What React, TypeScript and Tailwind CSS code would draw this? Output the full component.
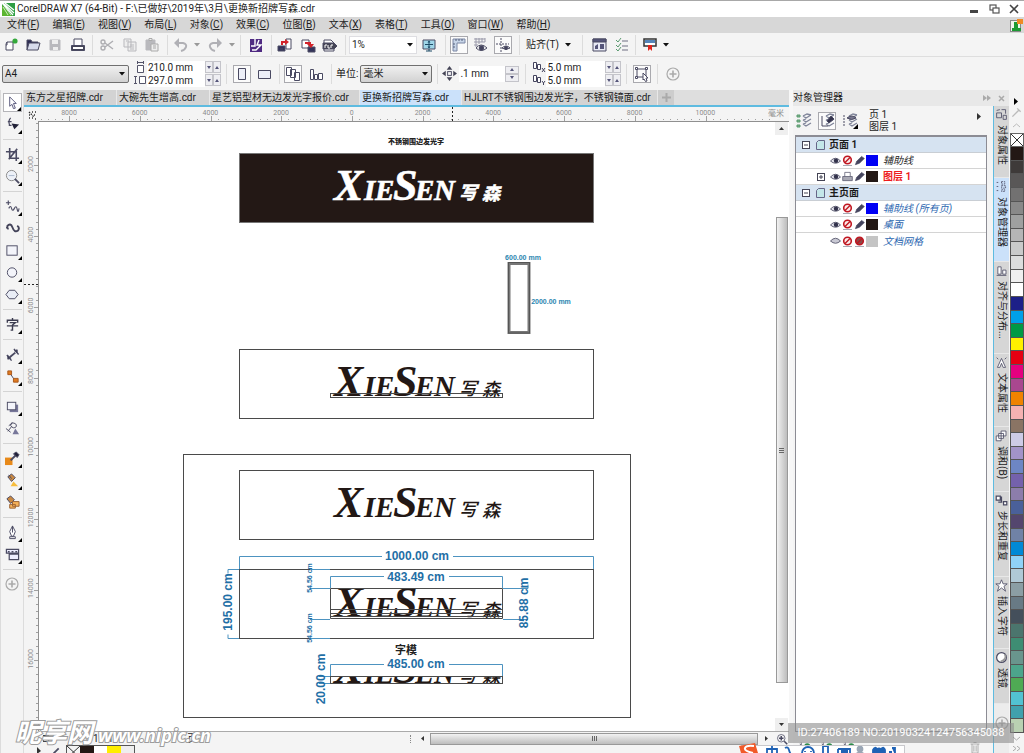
import React from "react";

type Kids = { children?: React.ReactNode };

const Svg = ({ children, s = 16 }: Kids & { s?: number }) => (
  <svg width={s} height={s} viewBox="0 0 16 16" fill="none" stroke="#4a4a62" strokeWidth="1" className="shrink-0" aria-hidden="true">
    {children}
  </svg>
);

const Btn = ({ w = "w-[22px]", label, boxed, children }: Kids & { w?: string; label: string; boxed?: boolean }) => (
  <button aria-label={label} className={`${w} flex h-5 shrink-0 items-center justify-center`}>
    {boxed ? (
      <span className="flex h-[18px] w-[18px] items-center justify-center border border-[#a9a9ae] bg-[#fbfbfb]">{children}</span>
    ) : (
      children
    )}
  </button>
);

const Sep = ({ w = "w-2" }: { w?: string }) => (
  <div className={`${w} flex shrink-0 justify-center`}>
    <div className="h-5 w-px bg-[#dcdcdc]" />
  </div>
);

const Caret = ({ c = "#111" }: { c?: string }) => (
  <svg width="6" height="4" viewBox="0 0 6 4" aria-hidden="true">
    <path d="M0 0h6L3 3.500z" fill={c} />
  </svg>
);

const Spin = ({ stacked }: { stacked?: boolean }) => (
  <div className={stacked ? "flex w-[14px] flex-col" : "flex w-4"}>
    {["减少", "增加"].map((l, i) => {
      const up = stacked ? i === 0 : i === 1;
      return (
        <button key={l} aria-label={l} className={`flex items-center justify-center border border-[#c4c4ca] bg-[#eeeef2] ${stacked ? "h-2 w-[14px]" : "h-3 w-2"}`}>
          <svg width="4" height="3" viewBox="0 0 4 3">
            <path d={up ? "M0 3h4L2 0z" : "M0 0h4L2 3z"} fill="#55557a" />
          </svg>
        </button>
      );
    })}
  </div>
);

const Combo = ({ w, value, label, plain }: { w: string; value: string; label: string; plain?: boolean }) => (
  <div className={`${w} relative shrink-0`}>
    <select
      aria-label={label}
      className={`block h-[18px] w-full appearance-none pl-[2px] text-[10px] leading-4 outline-none ${
        plain ? "border border-[#dedee2] bg-white" : "rounded-xs border border-[#707070] bg-gradient-to-b from-[#f0f0f0] to-[#d2d2d2]"
      }`}
    >
      <option>{value}</option>
    </select>
    <div className="pointer-events-none absolute top-[7px] right-1">
      <Caret />
    </div>
  </div>
);

const menus: [string, string][] = [
  ["文件", "F"], ["编辑", "E"], ["视图", "V"], ["布局", "L"], ["对象", "C"], ["效果", "C"],
  ["位图", "B"], ["文本", "X"], ["表格", "T"], ["工具", "O"], ["窗口", "W"], ["帮助", "H"],
];

const gray = "#b9b9bd";

function TitleBar() {
  return (
    <header className="flex h-[17px] shrink-0 items-center border-t border-[#a8a8a8] bg-white">
      <svg width="13" height="13" viewBox="0 0 13 13" className="mr-[2px] ml-[2px]" aria-hidden="true">
        <rect width="13" height="13" fill="#2f9e44" />
        <path d="M0 0L11 12M1 0L12 10M3 0L12 7" stroke="#fff" strokeWidth="1.200" />
        <path d="M0 2L10 13H0z" fill="#5cb531" />
        <path d="M2 3L9 12M1 4L6 12" stroke="#e9f7dc" strokeWidth=".8" />
      </svg>
      <h1 className="flex-1 text-[10px] leading-4">CorelDRAW X7 (64-Bit) - F:\已做好\2019年\3月\更换新招牌写森.cdr</h1>
      <button aria-label="最小化" className="flex w-5 justify-center"><span className="mt-1 h-[3px] w-2 bg-[#444]" /></button>
      <button aria-label="还原" className="flex w-5 justify-center">
        <svg width="11" height="11" viewBox="0 0 11 11" fill="#fff" stroke="#555" strokeWidth="1.200"><rect x="1" y="1" width="6" height="5" /><rect x="4" y="4" width="6" height="5" /></svg>
      </button>
      <button aria-label="关闭" className="flex w-5 justify-center">
        <svg width="10" height="10" viewBox="0 0 10 10" stroke="#444" strokeWidth="1.600"><path d="M1 1l8 8M9 1L1 9" /></svg>
      </button>
    </header>
  );
}

function MenuBar() {
  return (
    <nav className="flex h-4 shrink-0 items-center gap-[13px] bg-[#d7d7d7] pl-[7px] text-[10px] leading-4">
      {menus.map(([t, k]) => (
        <button key={t} className="whitespace-nowrap">{t}(<u>{k}</u>)</button>
      ))}
      <span className="mr-px ml-auto">
        <svg width="13" height="13" viewBox="0 0 13 13" aria-hidden="true">
          <rect x=".5" y="1.500" width="10" height="11" fill="#eef6ee" stroke="#888" />
          <path d="M4 3h4v6h3v3H2V9h2z" fill="#1c9a33" />
          <rect x="7" y="0" width="6" height="5" fill="#f08a24" />
        </svg>
      </span>
    </nav>
  );
}

const PlusCircle = () => (
  <svg width="14" height="14" viewBox="0 0 14 14" fill="none" stroke="#aaa" strokeWidth="1.200" aria-hidden="true">
    <circle cx="7" cy="7" r="6" />
    <path d="M3.500 7h7M7 3.500v7" strokeWidth="1.600" />
  </svg>
);

function Toolbar() {
  return (
    <div className="flex h-6 shrink-0 items-center border-b border-[#dedede] bg-[#f4f4f4] text-[10px]">
      <Btn label="新建"><Svg><path d="M4 5h6v8H3V7zM4 5v3H3" fill="#fff" /><circle cx="12" cy="4" r="2.600" fill="#35a93c" stroke="none" /></Svg></Btn>
      <Btn label="打开"><Svg><path d="M2 13V3h4l1 2h6v2" fill="#2c2c54" /><path d="M2 13l2-7h11l-2 7z" fill="#d7dbec" /></Svg></Btn>
      <Btn label="保存"><Svg><path d="M3 3h10v10H3z" fill={gray} stroke={gray} /><path d="M5 3h6v4H5zM6 10h5v3H6z" fill="#eee" stroke="none" /></Svg></Btn>
      <Btn label="打印" w="w-6"><Svg><path d="M4 8V2h8v6" fill="#fff" /><path d="M1.500 8.500h13v5h-13z" fill="#444456" /><path d="M3 11h10" stroke="#fff" strokeWidth="2" /></Svg></Btn>
      <Sep w="w-[5px]" />
      <Btn label="剪切" w="w-6"><Svg><g stroke="#aeaeb2" strokeWidth="1.400"><path d="M6 6l8 6M6 10l8-6" /><circle cx="4" cy="5" r="2" /><circle cx="4" cy="11" r="2" /></g></Svg></Btn>
      <Btn label="复制"><Svg><g stroke={gray} fill="#eee"><path d="M2 2h7v8H2zM6 5h8v9H6z" /><path d="M8 8h4M8 10h4M8 12h4M4 4h3" /></g></Svg></Btn>
      <Btn label="粘贴"><Svg><path d="M2 3h9v10H2z" fill={gray} stroke={gray} /><path d="M5 1.500h3v2H5zM7 7h7v7H7z" fill="#eee" stroke="#aaa" /><path d="M9 9h3M9 11h3" stroke="#aaa" /></Svg></Btn>
      <Sep />
      <Btn label="撤消" w="w-5"><Svg><path d="M4 6h6q4 1 3 4t-5 4" stroke="#b0b0b5" strokeWidth="2" /><path d="M1 6l5-5v10z" fill="#b0b0b5" stroke="none" /></Svg></Btn>
      <Btn label="撤消列表" w="w-3"><Caret c="#999" /></Btn>
      <Btn label="重做" w="w-6"><Svg><path d="M12 6H6q-4 1-3 4t5 4" stroke="#b0b0b5" strokeWidth="2" /><path d="M15 6l-5-5v10z" fill="#b0b0b5" stroke="none" /></Svg></Btn>
      <Btn label="重做列表" w="w-[10px]"><Caret c="#999" /></Btn>
      <Sep w="w-[6px]" />
      <Btn label="搜索内容" w="w-[26px]"><Svg><path d="M2 2h12v13H2z" fill="#4f2a82" stroke="none" /><path d="M7 2v7H3M11 3L9 8h4l-5 5H4" stroke="#fff" strokeWidth="1.400" /></Svg></Btn>
      <Sep w="w-1" />
      <Btn label="导入" w="w-6"><Svg><path d="M1 9h7v5H1z" fill="#33335a" /><path d="M9 2h5v10H9zM3 12h3" fill="#fff" /><path d="M5 8V5h4" stroke="#d2232a" strokeWidth="2" /><path d="M8 2l4 3-4 3z" fill="#d2232a" stroke="none" /></Svg></Btn>
      <Btn label="导出"><Svg><path d="M2 3h7v8H2z" fill="#fff" /><path d="M8 10h7v5H8z" fill="#33335a" /><path d="M5 6h5v2" stroke="#d2232a" strokeWidth="2" /><path d="M7 7h7l-3 4z" fill="#d2232a" stroke="none" /></Svg></Btn>
      <Btn label="发布为PDF"><Svg><path d="M2 3h7l3 3v8H2z" fill="#fff" /><path d="M1 6h11l3 3-3 3H1z" fill="#444454" /><path d="M3 8v3M6 8v3M9 8v3M3 8h2M9 8h2M6 11h2" stroke="#fff" /></Svg></Btn>
      <Sep />
      <Combo w="w-[68px]" value="1%" label="缩放级别" plain />
      <Btn label="全屏预览" w="w-6"><Svg><path d="M2 3h12v9H2z" fill="#9fd6e8" /><path d="M8 4v7M4 7.500h8M5 14h6M8 12v2" stroke="#1d4b66" /><path d="M6.500 5.500L8 3.500l1.500 2M6.500 9.500L8 11.500l1.500-2" fill="#1d4b66" stroke="none" /></Svg></Btn>
      <Sep />
      <Btn label="显示标尺" w="w-5" boxed><Svg><path d="M2 2h12v4H6v8H2z" fill="#c8d5e8" stroke="#7a86a4" /><path d="M5 2v2M8 2v2M11 2v2M2 7h2M2 10h2" stroke="#55607a" /></Svg></Btn>
      <Btn label="显示网格" w="w-6"><Svg><path d="M1 2h11M1 5h11M1 8h4M3 1v9M6 1v6M9 1v4M12 1v4" stroke="#9a9aaa" /><path d="M3 11q5-6 11 0-6 5-11 0z" fill="#fff" /><circle cx="8.500" cy="11" r="2.300" fill="#44445e" /></Svg></Btn>
      <Btn label="显示辅助线" w="w-5" boxed><Svg><path d="M6 1v14M1 7h13" strokeDasharray="2 1" /><path d="M7 11q4-4 8 0-4 3-8 0z" fill="#fff" /><circle cx="11" cy="11" r="1.500" fill="#44445e" /></Svg></Btn>
      <Sep w="w-[13px]" />
      <button className="flex items-center gap-[6px] pr-2 text-[10px] leading-4">贴齐(T)<Caret /></button>
      <Sep />
      <Btn label="选项" w="w-6"><Svg><path d="M2 2h13v12H2z" fill="#e8eaf5" /><path d="M2 2h13v3H2z" fill="#55557a" /><path d="M4 9l3-2v5H4zM9 7h4v5H9z" fill="#55557a" stroke="none" /></Svg></Btn>
      <Btn label="清单"><Svg><path d="M2 3l2 2 3-4M2 8l2 2 3-4M2 12l2 2 3-4" stroke="#5b9a70" /><path d="M8 4h6M8 9h6M8 13h6" stroke="#9a9aa8" strokeWidth="1.500" /></Svg></Btn>
      <Sep w="w-[6px]" />
      <Btn label="应用程序启动器"><Svg><path d="M2 2h12v7H2z" fill="#fff" stroke="#333" strokeWidth="1.500" /><path d="M3 3h10v3H3z" fill="#5585b8" stroke="none" /><path d="M6 8h4v6l-2-2-2 2z" fill="#e2231a" stroke="none" /></Svg></Btn>
      <Btn label="启动器列表" w="w-[10px]"><Caret /></Btn>
    </div>
  );
}

const Num = ({ w, value, label }: { w: string; value: string; label: string }) => (
  <input aria-label={label} defaultValue={value} className={`${w} h-[13px] bg-white pl-px text-[10px] leading-3 outline-none`} />
);

const DupIcon = ({ axis }: { axis: string }) => (
  <svg width="14" height="12" viewBox="0 0 14 12" fill="#fff" stroke="#44445e" aria-hidden="true">
    <path d="M1.500 1.500h3v6h-3zM5.500 3.500h3v5h-3z" />
    <path d={axis === "x" ? "M10 7l3 4M13 7l-3 4" : "M10 7l1.500 2L13 7M11.500 9v2"} />
  </svg>
);

function PropertyBar() {
  return (
    <div className="flex h-[33px] shrink-0 items-center bg-[#f4f4f4] pl-[2px] text-[10px]">
      <Combo w="w-[127px]" value="A4" label="页面大小" />
      <div className="ml-1 flex flex-col">
        {[["210.0 mm", "宽度"], ["297.0 mm", "高度"]].map(([v, l], i) => (
          <div key={l} className="flex h-[13px] items-center">
            <svg width="14" height="12" viewBox="0 0 14 12" fill="#fff" stroke="#55556a" aria-hidden="true">
              {i ? <path d="M2.500 2v8M1 2.500h3M1 9.500h3M6.500 2.500h6v7h-6z" /> : <path d="M4.500 4.500h6v7h-6zM4 1.500h7M4.500 0v3M10.500 0v3" />}
            </svg>
            <Num w="w-[58px]" value={v} label={l} />
            <Spin />
          </div>
        ))}
      </div>
      <Sep w="w-[11px]" />
      <Btn label="纵向" w="w-5" boxed><Svg><path d="M4.500 2.500h7v11h-7z" fill="#edeff8" /></Svg></Btn>
      <Btn label="横向" w="w-6"><Svg><path d="M2.500 4.500h12v8h-12z" fill="#edeff8" /></Svg></Btn>
      <Sep w="w-[7px]" />
      <Btn label="所有页面" w="w-5" boxed><Svg><path d="M1.500 1.500h5v8h-5zM5.500 3.500h5v8h-5zM9.500 6.500h5v8h-5z" fill="#fff" /></Svg></Btn>
      <Btn label="当前页" w="w-[25px]"><Svg><path d="M2.500 3.500h3v10h-3zM6.500 8.500h3v5h-3zM10.500 7.500h4v6h-4z" fill="#fff" /></Svg></Btn>
      <Sep w="w-[6px]" />
      <span className="mx-[2px] leading-4 whitespace-nowrap">单位:</span>
      <Combo w="w-[72px]" value="毫米" label="单位" />
      <Sep w="w-[10px]" />
      <Svg s={15}><path d="M8 0l3 4H5zM8 16l3-4H5zM0 8l4-3v6zM16 8l-4-3v6z" fill="#444456" stroke="none" /><rect x="6" y="6" width="4" height="4" /></Svg>
      <div className="ml-[2px] flex h-4 items-center bg-white">
        <Num w="w-[46px]" value=".1 mm" label="微调距离" />
        <Spin stacked />
      </div>
      <Sep w="w-[13px]" />
      <div className="flex flex-col">
        {["x", "y"].map((a) => (
          <div key={a} className="flex h-[13px] items-center">
            <DupIcon axis={a} />
            <Num w="w-[59px]" value="5.0 mm" label={`再制距离 ${a}`} />
            <Spin />
          </div>
        ))}
      </div>
      <Sep w="w-[10px]" />
      <Btn label="视为已填充" boxed><Svg><path d="M3 3h9v8H3z" /><path d="M1.500 1.500h2v2h-2zM11.500 1.500h2v2h-2zM1.500 10.500h2v2h-2z" fill="#fff" /><path d="M9 7l5 5h-2l1 3-1.500.5L10 13l-1 1z" fill="#fff" /></Svg></Btn>
      <Sep />
      <Btn label="快速自定义" w="w-6"><PlusCircle /></Btn>
    </div>
  );
}

const tools: ({ n: string; d: React.ReactNode; f?: boolean } | null)[] = [
  { n: "选择", f: true, d: <path d="M5 2l7 7H9l2 5-2 .5L7.500 10 5 12z" fill="#fff" stroke="#55557a" /> },
  { n: "形状", f: true, d: <><path d="M6 1q-3 3-1 8M3 5h4M4 9h3" strokeWidth="1.300" /><path d="M7 7l8 1-5 5z" fill="#222238" stroke="none" /></> },
  null,
  { n: "裁剪", f: true, d: <path d="M5 1v11h10M1 5h11v10M13 2L4 13" strokeWidth="1.700" /> },
  { n: "缩放", f: true, d: <><circle cx="7" cy="7" r="5.500" fill="#edf1f8" stroke="#888" /><path d="M4 7h6" stroke="#aab8cc" /><path d="M10.500 10.500L15 15" strokeWidth="2" /></> },
  null,
  { n: "手绘", f: true, d: <path d="M1 4h5M3.500 1.500v5M4 10q2-4 3 0t3 0 3 1 2-1" strokeWidth="1.200" /> },
  { n: "艺术笔", d: <path d="M2 6q4-5 6 1t6 3q2-3-1-5M2 6q0 2 2 2" stroke="#44445a" strokeWidth="2" /> },
  { n: "矩形", f: true, d: <rect x="2" y="3" width="11" height="10" fill="#f3f4fa" /> },
  { n: "椭圆形", f: true, d: <circle cx="7.500" cy="8" r="5" fill="#f3f4fa" /> },
  { n: "多边形", f: true, d: <path d="M4.500 3.500h6l3.500 4.500-3.500 4.500h-6L1 8z" fill="#e9edf6" /> },
  null,
  { n: "文本", f: true, d: <path d="M8 1v2M2.500 6V3.500h11V6M5 6h6L8 8.500V14H6M2 9.500h12" stroke="#3c3c50" strokeWidth="1.500" /> },
  null,
  { n: "平行度量", f: true, d: <><path d="M5 11L11 6" strokeWidth="2" /><path d="M2 8.500l5 6M9.500 2l5 6" strokeWidth="1.500" /><path d="M3 9l3 3-3 1zM10 4l3-1v3z" fill="#33334a" /></> },
  { n: "连接器", f: true, d: <><path d="M5 4l6 9" /><path d="M3 2h4v4H3zM9 10h5v4H9z" fill="#e07a1f" stroke="#a8561a" /></> },
  null,
  { n: "阴影", f: true, d: <><rect x="5" y="6" width="9" height="8" fill="#77779a" stroke="none" /><rect x="2.500" y="3.500" width="9" height="8" fill="#f3f4fa" /></> },
  { n: "透明度", d: <><path d="M7 2q6 0 5 4-3 3-6-1zM7 6l-4 5M1 8l5 4M8 2L4 5" /><path d="M8 14l3-6 4 6z" fill="#77779a" stroke="none" /></> },
  null,
  { n: "颜色滴管", f: true, d: <><path d="M0 7h8v8H0z" fill="#e88a1a" stroke="none" /><path d="M6 10l6-6" strokeWidth="2" /><path d="M9 3l3-2 3 3-2 3z" fill="#22223a" /></> },
  { n: "交互式填充", f: true, d: <><path d="M3 4l4-3 4 4-4 4z" fill="#c98840" /><path d="M4 2l3 4" /><path d="M6 14l3-5 5 5z" fill="#f6bd3d" stroke="none" /></> },
  { n: "智能填充", d: <><path d="M2 4l4-3 4 4-4 4z" fill="#c98840" /><path d="M8 7h7v5H8zM5 10h6v4H5z" fill="#f5b25a" stroke="#9a6030" /></> },
  null,
  { n: "轮廓笔", f: true, d: <path d="M8 1l3 6-2 5H7L5 7zM8 1v7M5 12.500h6v2H5z" fill="#fff" /> },
  { n: "图框", f: true, d: <path d="M1.500 2.500h13v4h-13zM4.500 7.500h10v6h-10zM3 5h2M7 5h2M11 5h2" fill="#eef" strokeWidth="1.300" /> },
  null,
];

function Toolbox() {
  return (
    <aside className="flex w-6 shrink-0 flex-col items-center border-r border-l border-[#dcdcdc] bg-[#f4f4f4] pt-px">
      {tools.map((t, i) =>
        t ? (
          <button key={t.n} aria-label={t.n} className="flex h-[22px] w-full shrink-0 items-center justify-center">
            <span className={`relative flex h-[19px] w-[19px] items-center justify-center ${i === 0 ? "border border-[#b4b4b8] bg-white" : ""}`}>
              <Svg s={15}>{t.d}</Svg>
              {t.f && (
                <svg className="absolute right-0 bottom-0" width="4" height="4" viewBox="0 0 4 4"><path d="M4 0v4H0z" fill="#000" /></svg>
              )}
            </span>
          </button>
        ) : (
          <div key={i} className="flex h-2 w-full shrink-0 items-center justify-center">
            <div className="h-px w-[19px] bg-[#d4d4d4]" />
          </div>
        ),
      )}
      <button aria-label="快速自定义" className="flex h-[22px] items-center"><PlusCircle /></button>
    </aside>
  );
}

const STEP = 70.7;

function HRuler() {
  return (
    <svg className="block h-[14px] w-full" fontSize="7" fill="#8c8c8c" aria-hidden="true">
      {Array.from({ length: 104 }, (_, i) => {
        const big = i % 10 === 4;
        return <rect key={i} x={Math.round(17 + (i * STEP) / 10)} y={big ? 9 : 12} width="1" height={big ? 5 : 1} fill="#a0a0a0" />;
      })}
      {[8000, 6000, 4000, 2000, 0, 2000, 4000, 6000, 8000, 10000].map((v, i) => (
        <text key={i} x={45 + i * STEP} y="8" textAnchor="middle">{v}</text>
      ))}
      <text x="752" y="9" textAnchor="middle" fontSize="8">毫米</text>
      <path d="M428.500 0v14" stroke="#222" strokeDasharray="2 2" />
      <path d="M5 5l5 5M5 8h1M8 5h1M5 11h1M11 5h1M10 8h1M8 11h1M11 12h1" stroke="#333" strokeDasharray="1.500 1" strokeWidth="1.300" />
    </svg>
  );
}

function VRuler() {
  return (
    <svg className="block h-full w-[15px] shrink-0 border-r border-[#909090]" fontSize="7" fill="#8c8c8c" aria-hidden="true">
      {Array.from({ length: 85 }, (_, i) => {
        const big = i % 10 === 6;
        return <rect key={i} x={big ? 10 : 12} y={Math.round(2 + (i * STEP) / 10)} width={big ? 4 : 2} height="1" fill="#a0a0a0" />;
      })}
      {[2000, 4000, 6000, 8000, 10000, 12000, 14000, 16000].map((v, i) => (
        <text key={v} transform={`translate(9 ${43 + i * STEP}) rotate(-90)`} textAnchor="middle">{v}</text>
      ))}
      <path d="M0 163.500h15" stroke="#222" strokeDasharray="2 2" />
    </svg>
  );
}

const Logo = ({ y, fill, heavy }: { y: number; fill: string; heavy?: boolean }) => (
  <g transform={`translate(0 ${y})`} fill={fill} stroke={fill} strokeWidth={heavy ? 0.6 : 0}>
    <g fontFamily="'Liberation Serif', serif" fontStyle="italic" fontWeight="700">
      <text x="334" y="0" fontSize="44">X</text>
      <text x="364" y="0" fontSize="29">I</text>
      <text x="375" y="0" fontSize="29">E</text>
      <text x="393" y="0" fontSize="44">S</text>
      <text x="415" y="0" fontSize="29">E</text>
      <text x="434" y="0" fontSize="29">N</text>
    </g>
    <g fontSize="18" fontWeight={heavy ? 700 : 500} fontStyle="italic">
      <text x="459" y="-1">写</text>
      <text x="482" y="0">森</text>
    </g>
  </g>
);

function Artwork() {
  return (
    <svg className="block h-full min-w-0 flex-1 bg-white" role="img" aria-label="更换新招牌写森">
      <defs>
        <clipPath id="strip"><rect x="330" y="676" width="173" height="7" /></clipPath>
      </defs>
      <g transform="translate(-39 -122)" fill="none" stroke="#4a4a4a">
        <text x="416" y="144" fontSize="7" fontWeight="900" fill="#222" stroke="none" textAnchor="middle">不锈钢围边发光字</text>
        <rect x="239.500" y="153.500" width="354" height="69" fill="#231815" stroke="#777" />
        <Logo y={200} fill="#fff" heavy />

        <rect x="509" y="263.500" width="20" height="69" stroke="#777" strokeWidth="3" />
        <rect x="508.500" y="262.500" width="21" height="70.500" stroke="#555" />

        <rect x="239.500" y="349.500" width="354" height="69" />
        <Logo y={396} fill="#231815" />
        <rect x="330.500" y="393.500" width="172" height="4" />

        <rect x="183.500" y="454.500" width="447" height="263" />
        <rect x="239.500" y="470.500" width="354" height="69" />
        <Logo y={517} fill="#231815" />

        <rect x="239.500" y="569.500" width="354" height="69" />
        <Logo y={617} fill="#231815" />
        <path d="M330.500 588.500h172v30h-172zM330.500 609.500h172M330.500 613.500h172M330.500 616.500h172" />

        <g clipPath="url(#strip)"><Logo y={683} fill="#231815" /></g>
        <rect x="330.500" y="676.500" width="172" height="7" />
        <text x="406" y="654" fontSize="11" fontWeight="700" fill="#222" stroke="none" textAnchor="middle">字模</text>

        <g stroke="#4d93c0">
          <path d="M239.500 569v-12.500H382M453 556.500h140.500V569" />
          <path d="M330.500 588v-11.500H384M449 576.500h53.500V588" />
          <path d="M330.500 676v-11.500H384M449 664.500h53.500V676" />
          <path d="M239 569.500h-11v4M239 638.500h-11v-4M330 588.500h-20M330 619.500h-20M503 588.500h25v-4M503 619.500h25M330 676.500h-11M330 683.500h-11" />
          <path d="M310 569.500h20M310 638.500h20" />
        </g>
        <g fill="#1f6fa6" stroke="none" fontFamily="'Liberation Sans', sans-serif" fontWeight="700" fontSize="12" textAnchor="middle">
          <text x="417" y="560">1000.00 cm</text>
          <text x="416" y="581">483.49 cm</text>
          <text x="416" y="668">485.00 cm</text>
          <text transform="translate(232 602) rotate(-90)">195.00 cm</text>
          <text transform="translate(528 603) rotate(-90)">85.88 cm</text>
          <text transform="translate(325 679) rotate(-90)">20.00 cm</text>
          <g fontSize="7">
            <text transform="translate(312 578) rotate(-90)">54.56 cm</text>
            <text transform="translate(312 628) rotate(-90)">54.56 cm</text>
            <text x="523" y="260" fill="#2b86b0">600.00 mm</text>
            <text x="551" y="304" fill="#2b86b0">2000.00 mm</text>
          </g>
        </g>
      </g>
    </svg>
  );
}

const Arrow = ({ d, c = "#333" }: { d: string; c?: string }) => (
  <svg width="7" height="7" viewBox="0 0 7 7" aria-hidden="true"><path d={d} fill={c} /></svg>
);

function Document() {
  const tabs: [string, string][] = [
    ["东方之星招牌.cdr", "w-[93px]"], ["大碗先生增高.cdr", "w-[93px]"], ["星艺铝型材无边发光字报价.cdr", "w-[150px]"],
    ["更换新招牌写森.cdr", "w-[102px]"], ["HJLRT不锈钢围边发光字，不锈钢镜面.cdr", "w-[196px]"],
  ];
  return (
    <main className="flex min-w-0 flex-1 flex-col bg-[#f4f4f4]">
      <div className="flex h-[15px] shrink-0 bg-[#dedede] text-[10px] leading-4" role="tablist">
        {tabs.map(([t, w], i) => (
          <button key={t} role="tab" aria-selected={i === 3} className={`${w} shrink-0 border-r border-[#e8e8e8] pl-[2px] text-left whitespace-nowrap ${i === 3 ? "bg-[#cbe1fa]" : "bg-[#d3d3d3]"}`}>
            {t}
          </button>
        ))}
        <button aria-label="新标签" className="flex w-4 items-center justify-center bg-[#cdcdcd]">
          <svg width="9" height="9" viewBox="0 0 9 9" stroke="#aaa" strokeWidth="2"><path d="M0 4.500h9M4.500 0v9" /></svg>
        </button>
      </div>
      <div className="h-[2px] shrink-0 bg-[#5ebbe0]" />
      <div className="h-[14px] shrink-0"><HRuler /></div>
      <div className="flex min-h-0 flex-1">
        <VRuler />
        <div className="flex min-w-0 flex-1 border-t border-[#909090]"><Artwork /></div>
        <div className="flex w-[15px] shrink-0 flex-col items-center border-t border-[#909090] bg-white">
          <button aria-label="向上滚动" className="flex h-[13px] w-[13px] items-center justify-center bg-[#efefef]"><Arrow d="M1 5h5L3.500 2z" /></button>
          <div className="flex w-full flex-1 flex-col items-center pt-[82px] pb-[35px]">
            <div className="flex w-3 flex-1 items-center justify-center border border-[#999] bg-gradient-to-r from-[#f2f2f2] to-[#bdbdbd]">
              <div className="flex h-[5px] w-[5px] flex-col justify-center border-y border-[#666]"><div className="h-px bg-[#666]" /></div>
            </div>
          </div>
          <button aria-label="向下滚动" className="flex h-[13px] w-[13px] items-center justify-center bg-[#efefef]"><Arrow d="M1 2h5L3.500 5z" /></button>
        </div>
      </div>
      <div className="ml-[15px] flex h-[14px] shrink-0 items-center border-t border-[#aaa] text-[10px] leading-3">
        <div className="flex w-[376px] shrink-0 items-center gap-5 pl-1 whitespace-nowrap">
          <span className="h-[7px] w-[6px] border border-[#444]" />
          <span className="pl-6">1 / 1</span><Arrow d="M2 1v5l3-2.500z" /><Arrow d="M2 1v5l3-2.500z" /><span>页 1</span>
          <span className="mr-1 ml-auto h-2 w-px border-r border-dotted border-[#888]" />
        </div>
        <button aria-label="向左滚动" className="flex w-[15px] justify-center"><Arrow d="M5 1v5L2 3.500z" /></button>
        <div className="flex h-3 min-w-0 flex-1 items-center justify-center border border-[#999] bg-gradient-to-b from-[#f2f2f2] to-[#bdbdbd]">
          <div className="flex h-[5px] w-[5px] justify-center border-x border-[#666]"><div className="w-px bg-[#666]" /></div>
        </div>
        <button aria-label="向右滚动" className="flex w-4 justify-center"><Arrow d="M2 1v5l3-2.500z" /></button>
        <button aria-label="导航器" className="flex w-[15px] justify-center"><Svg s={12}><circle cx="7" cy="7" r="5" /><path d="M11 11l4 4M4 7h6M7 4v6" strokeWidth="2" /></Svg></button>
      </div>
      <div className="flex h-2 shrink-0 overflow-hidden pl-[5px]">
        <div className="flex w-[37px] items-start justify-around pt-[2px]"><Arrow d="M2 0v7l4-3z" /><Svg s={7}><path d="M1 15l12-12" strokeWidth="4" /></Svg></div>
        <div className="flex h-3 border border-[#555]">
          <svg width="13" height="12" stroke="#333"><path d="M0 0l13 12M13 0L0 12" /></svg>
          <div className="w-[14px] bg-[#231815]" /><div className="w-[13px] bg-white" /><div className="w-[14px] bg-[#ffee00]" /><div className="w-[13px] bg-[#eee]" />
        </div>
      </div>
    </main>
  );
}

const Eye = ({ off }: { off?: boolean }) => (
  <svg width="11" height="8" viewBox="0 0 11 8" aria-hidden="true">
    <path d="M.5 4Q5.500-1.500 10.500 4 5.500 8.500.5 4z" fill={off ? "#c9c9d4" : "#e6e6ee"} stroke="#66667a" />
    {!off && <circle cx="6" cy="3.700" r="2.200" fill="#33334c" />}
  </svg>
);
const No = ({ dark }: { dark?: boolean }) => (
  <svg width="11" height="11" viewBox="0 0 11 11" fill="none" aria-hidden="true">
    <circle cx="5.500" cy="5" r="3.800" fill={dark ? "#8a4a4a" : "#fbeaea"} stroke="#c01822" strokeWidth="1.600" />
    <path d="M3 7.500l5-5" stroke="#c01822" strokeWidth="1.500" />
    <path d="M1 10.500h9" stroke="#a9a9b4" />
  </svg>
);
const Printer = () => <Svg s={11}><path d="M4 8V2h8v6" fill="#fff" /><path d="M1 8h14v6H1z" fill="#a9a9b4" /></Svg>;
const Pencil = () => <Svg s={11}><path d="M2 14l2-5 7-7 4 3-7 7z" fill="#44445e" /></Svg>;

type Row = { t: string; head?: boolean; color?: string; cls?: string; off?: boolean; print?: boolean; plus?: boolean };
const rows: Row[] = [
  { t: "页面 1", head: true },
  { t: "辅助线", color: "bg-[#0000f5]", cls: "italic text-[#222]" },
  { t: "图层 1", color: "bg-[#231815]", cls: "font-bold text-[#ee1c1c]", print: true, plus: true },
  { t: "主页面", head: true },
  { t: "辅助线 (所有页)", color: "bg-[#0000f5]", cls: "italic text-[#2b66b0]" },
  { t: "桌面", color: "bg-[#231815]", cls: "italic text-[#2b66b0]" },
  { t: "文档网格", color: "bg-[#c4c4c4]", cls: "italic text-[#2b66b0]", off: true },
];

const Toggle = ({ plus }: { plus?: boolean }) => (
  <svg width="8" height="8" viewBox="0 0 8 8" fill="#fff" stroke="#445" aria-hidden="true">
    <rect x=".5" y=".5" width="7" height="7" /><path d={plus ? "M2 4h4M4 2v4" : "M2 4h4"} />
  </svg>
);

const Layers = () => <path d="M7 3l3 2 5-3M7 7l3 2 5-3M7 11l3 2 5-3M7 3l4-2 4 1M7 7l3-1M7 11l3-1" stroke="#7f8499" strokeWidth="1.300" />;

function ObjectManager() {
  return (
    <section className="flex min-w-0 flex-1 flex-col border-l-4 border-[#f7f7f7] bg-[#f4f4f4] text-[10px]">
      <div className="flex h-[29px] shrink-0 items-center">
        <Btn label="显示对象属性"><Svg><path d="M1 2h3v2H1zM1 7h3v2H1zM1 12h3v2H1z" fill="#7fb58a" stroke="#5b9a70" /><Layers /></Svg></Btn>
        <Btn label="跨图层编辑" w="w-6" boxed><Svg><Layers /><path d="M3 3v10h6" /><path d="M8 8l4-5 3 3-5 4z" fill="#33334c" /></Svg></Btn>
        <Btn label="图层管理器视图"><Svg><path d="M2 2v12" strokeDasharray="2 1" /><Layers /><path d="M5 5q5-4 9 0-4 3-9 0z" fill="#77778e" /><path d="M16 11v5h-5z" fill="#000" stroke="none" /></Svg></Btn>
        <div className="ml-2 flex-1 leading-3"><p>页 1</p><p>图层 1</p></div>
        <button aria-label="选项" className="mr-[10px] mb-2"><Arrow d="M1 0v7l4-3.500z" /></button>
      </div>
      <ul className="mr-[6px] ml-[2px] flex-1 border border-t-2 border-[#8c8c94] bg-white">
        {rows.map((r) =>
          r.head ? (
            <li key={r.t} className="flex h-4 items-center border-b border-[#c9ced4] bg-[#d6e3f1] pl-[6px] font-bold">
              <Toggle />
              <svg width="11" height="12" viewBox="0 0 11 12" className="mr-[3px] ml-[5px]"><path d="M3.500 1.500h6v9h-8v-7z" fill="#c4e6e9" stroke="#668" /></svg>
              {r.t}
            </li>
          ) : (
            <li key={r.t} className="flex h-4 items-center border-b border-[#d4d4d4] last:border-0">
              <span className="flex w-[34px] justify-center pl-4">{r.plus && <Toggle plus />}</span>
              <span className="flex items-center gap-px">
                <Eye off={r.off} />
                {r.print ? <Printer /> : <No />}
                {r.off ? <No dark /> : <Pencil />}
                <span className={`${r.color} h-[11px] w-3`} />
              </span>
              <span className={`pl-[5px] whitespace-nowrap ${r.cls}`}>{r.t}</span>
            </li>
          ),
        )}
      </ul>
      <div className="flex h-[21px] shrink-0 items-end gap-[10px] pl-[6px]">
        {["新建图层", "新建主图层", "新建奇数页"].map((n) => (
          <button key={n} aria-label={n}><Svg s={12}><path d="M1 4l5 3-4 2 6 4M3 2v3" /><circle cx="11" cy="7" r="4" fill="#2c8a4a" stroke="none" /></Svg></button>
        ))}
        <button aria-label="删除" className="mr-3 ml-auto"><Svg s={12}><path d="M2 4h12M4 4v12h8V4M6 2h4M6.500 6v8M9.500 6v8" stroke="#999" /></Svg></button>
      </div>
    </section>
  );
}

const sideTabs: { t: string; h: string; on?: boolean; d: React.ReactNode }[] = [
  { t: "对象属性", h: "h-[72px]", d: <path d="M2 6h6v6H2zM8 2h5v5M10 9h4v5h-4zM2 3l4-1" /> },
  { t: "对象管理器", h: "h-[84px]", on: true, d: <path d="M2 3h3M2 8h3M2 13h3M8 2h4v3H8zM8 7h5v3H8zM8 12h4v2H8z" strokeDasharray="2 1" /> },
  { t: "对齐与分布...", h: "h-[92px]", d: <path d="M2 14h12M3.500 3.500h4v9h-4zM9.500 7.500h4v5h-4z" fill="#fff" /> },
  { t: "文本属性", h: "h-[73px]", d: <path d="M3 14L8 3l5 11h-3L8 9l-2 5zM2 2l2 2M14 2l-2 2" fill="#fff" /> },
  { t: "调和(B)", h: "h-[65px]", d: <path d="M7.500 2.500h6v6h-6zM4.500 5.500h6v6h-6zM1.500 8.500h6v6h-6z" fill="#fff" /> },
  { t: "步长和重复", h: "h-[85px]", d: <path d="M1.500 2.500h5v5h-5zM10.500 9.500h4v4h-4zM8 3v7M4 10h5" fill="#fff" strokeWidth="1.500" /> },
  { t: "插入字符", h: "h-[72px]", d: <path d="M8 1l2 5h5l-4 3 2 6-5-4-5 4 2-6-4-3h5z" fill="#fff" /> },
  { t: "透镜", h: "h-[55px]", d: <><circle cx="8" cy="8" r="6" fill="#fff" strokeWidth="1.500" /><path d="M12 4q3 6-5 9" stroke="#999" strokeWidth="2" /></> },
];

function SideTabs() {
  return (
    <nav className="flex w-4 shrink-0 flex-col border-l border-[#5ebbe0] bg-[#ececec]">
      {sideTabs.map((s) => (
        <button key={s.t} className={`${s.h} flex shrink-0 flex-col items-center gap-1 border-b border-[#e8e8e8] pt-[2px] ${s.on ? "bg-[#cbe1fa]" : "bg-[#d6d6d6]"}`}>
          <Svg s={13}>{s.d}</Svg>
          <span className="text-[10px] leading-[14px] whitespace-nowrap [text-orientation:sideways] [writing-mode:vertical-rl]">{s.t}</span>
        </button>
      ))}
      <button aria-label="添加面板" className="mt-3 flex justify-center"><PlusCircle /></button>
    </nav>
  );
}

function Docker() {
  return (
    <div className="flex w-[220px] shrink-0 flex-col">
      <div className="flex h-4 shrink-0 items-center border-l-4 border-[#f7f7f7] bg-[#e8e8e8] pr-1 text-[10px]">
        <h2 className="flex-1 leading-4">对象管理器</h2>
        <button aria-label="折叠泊坞窗" className="mr-[7px]"><svg width="8" height="6" viewBox="0 0 8 6" fill="#aaa"><path d="M0 0l4 3-4 3zM4 0l4 3-4 3z" /></svg></button>
        <button aria-label="关闭泊坞窗"><svg width="7" height="7" viewBox="0 0 7 7" stroke="#aaa" strokeWidth="1.500"><path d="M1 1l5 5M6 1L1 6" /></svg></button>
      </div>
      <div className="flex min-h-0 flex-1">
        <ObjectManager />
        <SideTabs />
      </div>
    </div>
  );
}

const swatches = [
  "#231815", "#3e3a39", "#595757", "#727171", "#898989", "#9fa0a0", "#b5b5b6", "#c9caca", "#dcdddd", "#efefef", "#ffffff",
  "#1d2088", "#00a0e9", "#009944", "#fff100", "#e60012", "#e4007f", "#a9478f", "#f08300", "#f5b2b2", "#8a7464", "#cdcbe6",
  "#a293c8", "#6d86c4", "#7461ac", "#8c7dab", "#4a609a", "#54466e", "#7082a6", "#0089d6", "#90d2f7", "#b0c9d6", "#8b9ea4",
  "#687a85", "#444f5b", "#4b756d", "#3e8d73", "#69958d", "#4ca58b", "#4faa54", "#52c2d1", "#40a1ad", "#b9d1b2",
];

function Palette() {
  return (
    <aside className="flex w-[15px] shrink-0 flex-col items-center bg-[#f4f4f4]">
      <div className="flex h-7 shrink-0 flex-col items-center justify-between">
        <button aria-label="调色板选项" className="flex h-[15px] items-end"><Arrow d="M1 0v7l4-3.500z" c="#000" /></button>
        <Svg s={11}><path d="M2 14L12 4M9 2l5 5" stroke="#bbb" strokeWidth="2" /></Svg>
      </div>
      <svg width="9" height="15" viewBox="0 0 9 15" fill="none" stroke="#bbb" className="shrink-0"><path d="M1 9l3.500-3L8 9" /></svg>
      <button aria-label="无填充" className="h-[14px] w-[14px] shrink-0 border border-[#666] bg-white">
        <svg width="12" height="12" stroke="#333"><path d="M0 0l12 12M12 0L0 12" /></svg>
      </button>
      <div className="flex min-h-0 w-[14px] flex-1 flex-col">
        {swatches.map((c) => (
          <button key={c} aria-label={c} className="min-h-0 flex-1 border-x border-b border-[#555]" style={{ backgroundColor: c }} />
        ))}
      </div>
      <div className="flex h-5 shrink-0 flex-col items-center justify-around">
        <svg width="7" height="5" fill="none" stroke="#aaa"><path d="M0 1l3.500 3L7 1" /></svg>
        <svg width="7" height="5" fill="none" stroke="#aaa"><path d="M0 0l3 2.500L0 5M4 0l3 2.500L4 5" /></svg>
      </div>
    </aside>
  );
}

function InputMethodBar() {
  return (
    <div className="absolute right-[119px] bottom-0 flex h-2 w-[164px] items-start overflow-hidden border-t border-r border-[#c8c8cc] bg-white pl-6">
      <svg width="132" height="9" viewBox="0 0 132 9" fill="none" stroke="#1f62b5" strokeWidth="1.800" aria-hidden="true">
        <path d="M2 9V3h10v6M7 0v9M20 2q3-2 4 2t3 5" />
        <circle cx="43" cy="7" r="6" /><path d="M40 5v1M46 5v1" />
        <path d="M58 0h5v8h-5zM73 3h12v6M73 3v6M76 5h7M76 7h7" />
        <circle cx="95" cy="3" r="2.500" stroke="#9aa6b5" fill="#9aa6b5" /><path d="M90 9q5-5 10 0" stroke="#9aa6b5" />
        <path d="M108 4q2-4 4-1 2-1 4 0 3-3 4 1v5h-12zM127 2h3v7M124 6h3" fill="#1f62b5" />
      </svg>
    </div>
  );
}

function Watermarks() {
  return (
    <>
      <div className="pointer-events-none absolute bottom-0 left-[14px]">
        <svg width="204" height="42" viewBox="0 0 204 42" stroke="#9c9c9c" strokeWidth="2" fill="#fff" fontStyle="italic" fontWeight="700" paintOrder="stroke">
          <text x="1" y="31" fontSize="26">昵享网</text>
          <text x="84" y="31" fontSize="18" fontFamily="'Noto Sans', sans-serif">www.nipic.cn</text>
        </svg>
      </div>
      <div className="pointer-events-none absolute right-[10px] bottom-[10px] flex h-5 w-[226px] items-center justify-center bg-[#8c8c8c]/60 text-[11px] whitespace-nowrap text-white">
        ID:27406189 NO:20190324124756345088
      </div>
      <svg className="pointer-events-none absolute right-[264px] bottom-0" width="22" height="10" viewBox="0 0 22 10" aria-hidden="true">
        <path d="M1 3L17 0l3 10H3z" fill="#f15a29" /><path d="M16 3q-8-1-9 2t8 5" fill="none" stroke="#fff" strokeWidth="2" />
      </svg>
    </>
  );
}

export default function App() {
  return (
    <div className="relative flex h-screen flex-col overflow-hidden bg-[#f4f4f4] font-['Roboto','Noto_Sans_CJK_SC',sans-serif] text-[#1c1c1c]">
      <TitleBar />
      <MenuBar />
      <Toolbar />
      <PropertyBar />
      <div className="flex min-h-0 flex-1">
        <Toolbox />
        <Document />
        <Docker />
        <Palette />
      </div>
      <InputMethodBar />
      <Watermarks />
    </div>
  );
}
